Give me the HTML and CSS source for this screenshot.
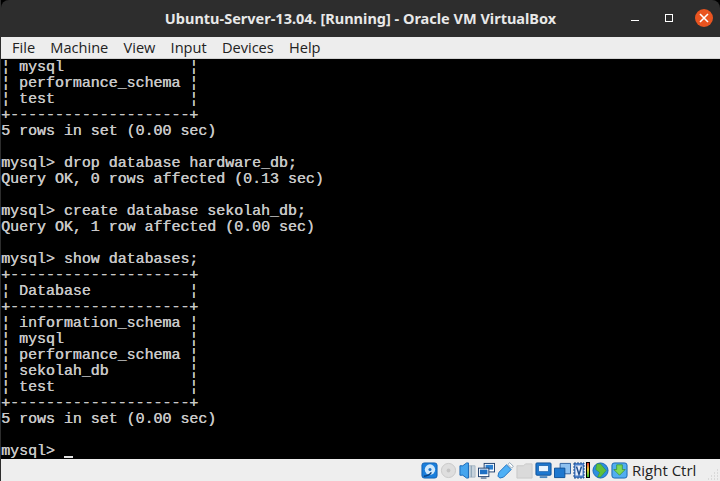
FILE: index.html
```html
<!DOCTYPE html>
<html lang="en">
<head>
<meta charset="utf-8">
<title>Ubuntu-Server-13.04. [Running] - Oracle VM VirtualBox</title>
<link rel="stylesheet" href="styles.css">
</head>
<body>
<div class="window">
  <header class="titlebar">
    <div class="title">Ubuntu-Server-13.04. [Running] - Oracle VM VirtualBox</div>
    <div class="controls">
      <span class="min"></span>
      <span class="max"></span>
      <span class="close"><svg width="10" height="10" viewBox="0 0 10 10"><path d="M1 1L9 9M9 1L1 9" stroke="#fff" stroke-width="1.6"/></svg></span>
    </div>
  </header>
  <nav class="menubar">
    <span>File</span><span>Machine</span><span>View</span><span>Input</span><span>Devices</span><span>Help</span>
  </nav>
  <pre class="console">¦ mysql              ¦
¦ performance_schema ¦
¦ test               ¦
+--------------------+
5 rows in set (0.00 sec)

mysql> drop database hardware_db;
Query OK, 0 rows affected (0.13 sec)

mysql> create database sekolah_db;
Query OK, 1 row affected (0.00 sec)

mysql> show databases;
+--------------------+
¦ Database           ¦
+--------------------+
¦ information_schema ¦
¦ mysql              ¦
¦ performance_schema ¦
¦ sekolah_db         ¦
¦ test               ¦
+--------------------+
5 rows in set (0.00 sec)

mysql> <span class="cursor"></span></pre>
  <footer class="statusbar">
    <svg class="ico" width="17" height="17" viewBox="0 0 18 18"><rect x="1" y="1" width="16" height="16" rx="2.500" fill="#1a7fdc" stroke="#0f5fb0"/><circle cx="9.500" cy="8" r="5.500" fill="#cfe8fb"/><circle cx="9.500" cy="8" r="1.600" fill="#1a6fc4"/><path d="M3 15c3 0 6-1 8-4" fill="none" stroke="#0b3f7c" stroke-width="1.500"/></svg>
    <svg class="ico" width="17" height="17" viewBox="0 0 18 18"><circle cx="9" cy="9" r="7.500" fill="#dedede" stroke="#c8c8c8"/><circle cx="9" cy="9" r="2" fill="#c4c4c4"/></svg>
    <svg class="ico" width="17" height="17" viewBox="0 0 18 18"><path d="M8 4h9v12H8z" fill="#c6d2dc" stroke="#a9b8c5"/><path d="M10 4v12M13 4v12" stroke="#7f98ad"/><path d="M1 4h3l4-3h2v16H8l-4-3H1z" fill="#45a5ee" stroke="#1766b5"/></svg>
    <svg class="ico" width="17" height="17" viewBox="0 0 18 18"><rect x="6.500" y="1.500" width="11" height="9" fill="#fff" stroke="#1d3f6e"/><rect x="8" y="3" width="8" height="5" fill="#2b7fd0"/><rect x="0.500" y="6.500" width="11" height="9" fill="#fff" stroke="#1d3f6e"/><rect x="2" y="8" width="8" height="5" fill="#1f70c4"/><path d="M3 17h6" stroke="#1d3f6e"/></svg>
    <svg class="ico" width="17" height="17" viewBox="0 0 18 18"><path d="M1 15L2 11 10 3 15 8 7 16 3 17z" fill="#4fb0f5" stroke="#1a6fc0"/><path d="M11.500 2.500L13.500 .7 17.300 4.500 15.500 6.500z" fill="#fff" stroke="#8fa6b8"/></svg>
    <svg class="ico" width="17" height="17" viewBox="0 0 18 18"><path d="M1 4h7l2-2h7v15H1z" fill="#dadada" stroke="#c8c8c8"/></svg>
    <svg class="ico" width="17" height="17" viewBox="0 0 18 18"><rect x="1" y="1" width="16" height="13" rx="1" fill="#1e78cf" stroke="#0d4f96"/><rect x="4" y="4" width="10" height="6" fill="#eaf5ff" stroke="#0d4f96" stroke-width=".5"/><path d="M5 16h8" stroke="#4a86bf" stroke-width="2"/></svg>
    <svg class="ico" width="17" height="17" viewBox="0 0 18 18"><path d="M6.500 1.500h11v11h-11z" fill="#8ec1f0" stroke="#2a5f9e"/><path d="M.5 6.500h11v10H.5z" fill="#1e78cf" stroke="#0d4f96"/></svg>
    <span class="vm">
      <svg width="12" height="17" viewBox="0 0 12 17"><rect x="1" y="1" width="10" height="15" fill="#4a7fc8" stroke="#21508f" stroke-dasharray="2 1"/><rect x="2.500" y="3.500" width="7" height="10" fill="#e8eefa"/><path d="M3.500 4.500l2.500 8 2.500-8" fill="none" stroke="#21508f" stroke-width="1.500"/></svg>
      <span class="meter"></span>
    </span>
    <svg class="ico" width="17" height="17" viewBox="0 0 18 18"><circle cx="9" cy="9" r="8" fill="#2d8fe0" stroke="#1766b5"/><path d="M5 2h4l6 7-6 7H6l2-5-4-3z" fill="#5fc03a" stroke="#2f8a2a" stroke-width=".5"/></svg>
    <svg class="ico" width="17" height="17" viewBox="0 0 18 18"><rect x="1" y="1" width="16" height="16" rx="2.500" fill="#52aef0" stroke="#1463b0"/><path d="M6 3h6v5h3l-6 6-6-6h3z" fill="#7ed957" stroke="#2f8a2a" stroke-width=".7"/></svg>
    <span class="hostkey">Right Ctrl</span>
    <svg class="grip" width="12" height="12" viewBox="0 0 12 12"><path d="M9 2h1M6 5h1M9 5h1M3 8h1M6 8h1M9 8h1M0 11h1M3 11h1M6 11h1M9 11h1" stroke="#c4c4c4"/></svg>
  </footer>
</div>
</body>
</html>
```
FILE: styles.css
```css
html, body {
  margin: 0;
  padding: 0;
  background: #000;
}
.window {
  box-sizing: border-box;
  width: 720px;
  height: 481px;
  display: flex;
  flex-direction: column;
  overflow: hidden;
  border-left: 1px solid #2d2d2d;
  font-family: "Open Sans", "Noto Sans", sans-serif;
}
.titlebar {
  height: 37px;
  background: #2d2d2d;
  border-radius: 8px 8px 0 0;
  position: relative;
  display: flex;
  align-items: center;
  justify-content: center;
}
.title {
  font-family: "Noto Sans", "Open Sans", sans-serif;
  font-weight: 700;
  font-size: 14.5px;
  color: #e8e8e8;
  margin-top: -1px;
}
.controls {
  position: absolute;
  right: 0;
  top: 0;
  height: 37px;
}
.min {
  position: absolute;
  right: 81px;
  top: 20px;
  width: 8px;
  height: 1px;
  background: #fff;
}
.max {
  position: absolute;
  right: 47px;
  top: 14px;
  width: 6px;
  height: 6px;
  border: 1px solid #fff;
}
.close {
  position: absolute;
  right: 7px;
  top: 9px;
  width: 18px;
  height: 18px;
  border-radius: 50%;
  background: #e95420;
  display: flex;
  align-items: center;
  justify-content: center;
}
.menubar {
  box-sizing: border-box;
  height: 22px;
  background: #ededed;
  border-bottom: 1px solid #d2d2d2;
  display: flex;
  align-items: center;
  gap: 15.2px;
  padding: 0 0 2px 11px;
  font-size: 14.6px;
  color: #222;
}
.console {
  flex: none;
  box-sizing: border-box;
  height: 400px;
  margin: 0;
  padding: 1px 0 0 0;
  background: #000;
  color: #c8c8c8;
  font-family: "Liberation Mono", monospace;
  font-size: 15px;
  letter-spacing: -.04px;
  line-height: 16px;
  text-shadow: .4px 0 0 #c8c8c8;
  overflow: hidden;
}
.cursor {
  display: inline-block;
  width: 9px;
  height: 2px;
  background: #e0e0e0;
  vertical-align: -3px;
}
.statusbar {
  flex: 1;
  background: #eeeeee;
  display: flex;
  align-items: center;
  gap: 2px;
  padding-left: 420px;
  position: relative;
}
.ico {
  flex: none;
}
.vm {
  display: flex;
  align-items: center;
  gap: 1px;
}
.meter {
  width: 2px;
  height: 14px;
  border: 1px solid #000;
  background: linear-gradient(#d33, #ec3 45%, #3b3);
}
.hostkey {
  font-size: 15px;
  color: #222;
  margin-left: 2px;
}
.grip {
  position: absolute;
  right: 0;
  bottom: 1px;
}
```
